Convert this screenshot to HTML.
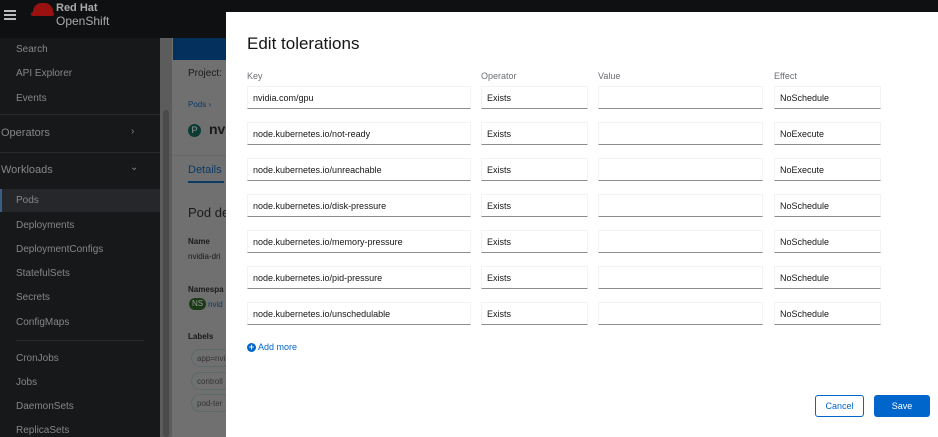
<!DOCTYPE html>
<html><head><style>
*{box-sizing:border-box;margin:0;padding:0}
body{width:938px;height:437px;overflow:hidden;background:#707070;font-family:"Liberation Sans",sans-serif;position:relative}
.hdr{position:absolute;left:0;top:0;width:938px;height:38px;background:#0f1011}
.side{position:absolute;left:0;top:38px;width:160px;height:399px;background:#17181a;color:#868686;font-size:10px}
.side div{position:absolute;left:16px}
.track{position:absolute;left:160px;top:38px;width:12px;height:399px;background:#5c5c5c}
.thumb{position:absolute;left:163px;top:110px;width:6px;height:327px;background:#4a4a4a;border-radius:3px}
.blue{position:absolute;left:173px;top:38px;width:60px;height:22px;background:#03305c}
.pg{position:absolute;color:#1a1a1a;font-size:10px}
.modal{position:absolute;left:226px;top:12px;width:712px;height:425px;background:#fff}
.lbl{position:absolute;top:71px;font-size:9px;color:#6a6e73}
.in{position:absolute;height:23px;border:1px solid #f3f3f3;border-bottom:1px solid #8a8d90;font-size:9px;color:#151515;padding:6px 5px 0}
</style></head><body>
<div class="hdr">
<div style="position:absolute;left:4px;top:10px;width:12px;height:2px;background:#bbb;box-shadow:0 4px 0 #bbb,0 8px 0 #bbb"></div>
<div style="position:absolute;left:33px;top:3px;width:20px;height:12px;background:#9a1111;border-radius:10px 10px 4px 4px"></div>
<div style="position:absolute;left:31px;top:12px;width:23px;height:4px;background:#9a1111;border-radius:3px"></div>
<div style="position:absolute;left:56px;top:2px;color:#aaa;font-size:11px;font-weight:bold;line-height:12px">Red Hat</div>
<div style="position:absolute;left:56px;top:14px;color:#aaa;font-size:12px">OpenShift</div>
</div>
<div class="side">
<div style="top:6px">Search</div>
<div style="top:30px">API Explorer</div>
<div style="top:55px">Events</div>
<div style="left:0;top:76px;width:160px;border-top:1px solid #2a2b2d"></div>
<div style="left:1px;top:89px;font-size:11px">Operators</div><div style="left:131px;top:88px">›</div>
<div style="left:0;top:114px;width:160px;border-top:1px solid #2a2b2d"></div>
<div style="left:1px;top:126px;font-size:11px">Workloads</div><div style="left:130px;top:124px">⌄</div>
<div style="left:0;top:151px;width:160px;height:23px;background:#26272a;border-left:2px solid #3a5f86"></div>
<div style="top:157px">Pods</div>
<div style="top:182px">Deployments</div>
<div style="top:206px">DeploymentConfigs</div>
<div style="top:230px">StatefulSets</div>
<div style="top:254px">Secrets</div>
<div style="top:279px">ConfigMaps</div>
<div style="top:302px;width:128px;border-top:1px solid #2a2b2d"></div>
<div style="top:315px">CronJobs</div>
<div style="top:339px">Jobs</div>
<div style="top:363px">DaemonSets</div>
<div style="top:387px">ReplicaSets</div>
</div>
<div class="track"></div><div class="thumb"></div>
<div class="blue"></div>
<div class="pg" style="left:188px;top:68px;font-size:10px">Project:</div>
<div class="pg" style="left:188px;top:100px;font-size:8px;color:#0b3a66">Pods ›</div>
<div style="position:absolute;left:188px;top:124px;width:13px;height:13px;border-radius:50%;background:#0c3b34;color:#999;font-size:9px;text-align:center;line-height:13px">P</div>
<div class="pg" style="left:209px;top:121px;font-size:14px;font-weight:bold">nv</div>
<div style="position:absolute;left:173px;top:155px;width:53px;border-top:1px solid #666"></div>
<div class="pg" style="left:188px;top:164px;font-size:11px;color:#0b3a66">Details</div>
<div style="position:absolute;left:188px;top:181px;width:36px;height:2px;background:#0b3a66"></div>
<div class="pg" style="left:188px;top:205px;font-size:13px">Pod de</div>
<div class="pg" style="left:188px;top:237px;font-size:8px;font-weight:bold">Name</div>
<div class="pg" style="left:188px;top:252px;font-size:8px">nvidia-dri</div>
<div class="pg" style="left:188px;top:285px;font-size:8px;font-weight:bold">Namespa</div>
<div style="position:absolute;left:189px;top:298px;width:17px;height:12px;border-radius:6px;background:#1b3a16;color:#999;font-size:8px;text-align:center;line-height:12px">NS</div>
<div class="pg" style="left:208px;top:300px;font-size:8px;color:#0b3a66">nvid</div>
<div class="pg" style="left:188px;top:332px;font-size:8px;font-weight:bold">Labels</div>
<div style="position:absolute;left:191px;top:349px;width:40px;height:18px;border:1px solid #5a6a6a;border-radius:9px"></div><div class="pg" style="left:197px;top:354px;font-size:8px;color:#333">app=nvi</div>
<div style="position:absolute;left:191px;top:372px;width:40px;height:18px;border:1px solid #5a6a6a;border-radius:9px"></div><div class="pg" style="left:197px;top:377px;font-size:8px;color:#333">controll</div>
<div style="position:absolute;left:191px;top:394px;width:40px;height:18px;border:1px solid #5a6a6a;border-radius:9px"></div><div class="pg" style="left:197px;top:399px;font-size:8px;color:#333">pod-ter</div>
<div class="modal"></div>
<div style="position:absolute;left:247px;top:34px;font-size:17px;color:#151515">Edit tolerations</div>
<div class="lbl" style="left:247px">Key</div>
<div class="lbl" style="left:481px">Operator</div>
<div class="lbl" style="left:598px">Value</div>
<div class="lbl" style="left:774px">Effect</div>
<div class="in" style="left:247px;top:86px;width:224px">nvidia.com/gpu</div><div class="in" style="left:481px;top:86px;width:107px">Exists</div><div class="in" style="left:598px;top:86px;width:165px"></div><div class="in" style="left:774px;top:86px;width:107px">NoSchedule</div>
<div class="in" style="left:247px;top:122px;width:224px">node.kubernetes.io/not-ready</div><div class="in" style="left:481px;top:122px;width:107px">Exists</div><div class="in" style="left:598px;top:122px;width:165px"></div><div class="in" style="left:774px;top:122px;width:107px">NoExecute</div>
<div class="in" style="left:247px;top:158px;width:224px">node.kubernetes.io/unreachable</div><div class="in" style="left:481px;top:158px;width:107px">Exists</div><div class="in" style="left:598px;top:158px;width:165px"></div><div class="in" style="left:774px;top:158px;width:107px">NoExecute</div>
<div class="in" style="left:247px;top:194px;width:224px">node.kubernetes.io/disk-pressure</div><div class="in" style="left:481px;top:194px;width:107px">Exists</div><div class="in" style="left:598px;top:194px;width:165px"></div><div class="in" style="left:774px;top:194px;width:107px">NoSchedule</div>
<div class="in" style="left:247px;top:230px;width:224px">node.kubernetes.io/memory-pressure</div><div class="in" style="left:481px;top:230px;width:107px">Exists</div><div class="in" style="left:598px;top:230px;width:165px"></div><div class="in" style="left:774px;top:230px;width:107px">NoSchedule</div>
<div class="in" style="left:247px;top:266px;width:224px">node.kubernetes.io/pid-pressure</div><div class="in" style="left:481px;top:266px;width:107px">Exists</div><div class="in" style="left:598px;top:266px;width:165px"></div><div class="in" style="left:774px;top:266px;width:107px">NoSchedule</div>
<div class="in" style="left:247px;top:302px;width:224px">node.kubernetes.io/unschedulable</div><div class="in" style="left:481px;top:302px;width:107px">Exists</div><div class="in" style="left:598px;top:302px;width:165px"></div><div class="in" style="left:774px;top:302px;width:107px">NoSchedule</div>
<div style="position:absolute;left:247px;top:343px;width:9px;height:9px;border-radius:50%;background:#0066cc;color:#fff;font-size:9px;line-height:9px;text-align:center;font-weight:bold">+</div>
<div style="position:absolute;left:258px;top:342px;font-size:9px;color:#0066cc">Add more</div>
<div style="position:absolute;left:815px;top:395px;width:49px;height:22px;border:1px solid #0066cc;border-radius:3px;color:#0066cc;font-size:9px;text-align:center;line-height:20px">Cancel</div>
<div style="position:absolute;left:874px;top:395px;width:56px;height:22px;background:#0066cc;border-radius:3px;color:#fff;font-size:9px;text-align:center;line-height:22px">Save</div>
</body></html>
